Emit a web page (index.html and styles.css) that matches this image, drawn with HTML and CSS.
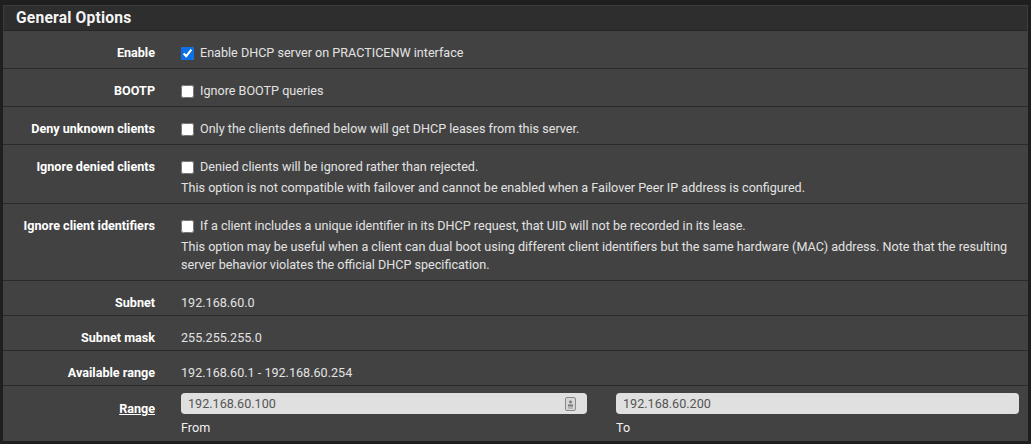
FILE: index.html
```html
<!DOCTYPE html>
<html lang="en">
<head>
    <meta charset="UTF-8">
    <title>DHCP Server - General Options</title>
    <link rel="stylesheet" href="styles.css">
</head>
<body>
    <div class="panel">
        <div class="panel-heading">General Options</div>
        <div class="panel-body">
            <div class="row">
                <div class="label">Enable</div>
                <div class="field">
                    <label class="check"><input type="checkbox" checked> Enable DHCP server on PRACTICENW interface</label>
                </div>
            </div>
            <div class="row">
                <div class="label">BOOTP</div>
                <div class="field">
                    <label class="check"><input type="checkbox"> Ignore BOOTP queries</label>
                </div>
            </div>
            <div class="row">
                <div class="label">Deny unknown clients</div>
                <div class="field">
                    <label class="check"><input type="checkbox"> Only the clients defined below will get DHCP leases from this server.</label>
                </div>
            </div>
            <div class="row">
                <div class="label">Ignore denied clients</div>
                <div class="field">
                    <label class="check"><input type="checkbox"> Denied clients will be ignored rather than rejected.</label>
                    <div class="help">This option is not compatible with failover and cannot be enabled when a Failover Peer IP address is configured.</div>
                </div>
            </div>
            <div class="row">
                <div class="label">Ignore client identifiers</div>
                <div class="field">
                    <label class="check"><input type="checkbox"> If a client includes a unique identifier in its DHCP request, that UID will not be recorded in its lease.</label>
                    <div class="help">This option may be useful when a client can dual boot using different client identifiers but the same hardware (MAC) address. Note that the resulting server behavior violates the official DHCP specification.</div>
                </div>
            </div>
            <div class="row static">
                <div class="label">Subnet</div>
                <div class="field">192.168.60.0</div>
            </div>
            <div class="row static">
                <div class="label">Subnet mask</div>
                <div class="field">255.255.255.0</div>
            </div>
            <div class="row static">
                <div class="label">Available range</div>
                <div class="field">192.168.60.1 - 192.168.60.254</div>
            </div>
            <div class="row range">
                <div class="label"><span class="link">Range</span></div>
                <div class="field range-fields">
                    <div class="range-col">
                        <div class="input">
                            <span>192.168.60.100</span>
                            <svg class="card" width="11" height="14" viewBox="0 0 11 14">
                                <rect x="0.5" y="0.5" width="10" height="13" rx="1.5" fill="#d6d6d6" stroke="#8a8a8a"/>
                                <circle cx="5.5" cy="5" r="1.4" fill="#777"/>
                                <rect x="3" y="7.5" width="5" height="2" fill="#777"/>
                                <rect x="3" y="10.5" width="5" height="1" fill="#999"/>
                            </svg>
                        </div>
                        <div class="sub">From</div>
                    </div>
                    <div class="range-col">
                        <div class="input"><span>192.168.60.200</span></div>
                        <div class="sub">To</div>
                    </div>
                </div>
            </div>
        </div>
    </div>
</body>
</html>
```

FILE: styles.css
```css
body {
    margin: 0;
    padding: 5px 3px 0 3px;
    background-color: #1f1f1f;
    font-family: Roboto, "Liberation Sans", sans-serif;
    font-size: 12.6px;
    color: #e2e2e2;
}
.panel {
    width: 1025px;
    background-color: #424242;
}
.panel-heading {
    background-color: #2e2e2e;
    border: 1px solid #3c3c3c;
    border-bottom: 1px solid #262626;
    height: 24px;
    line-height: 24px;
    padding-left: 12px;
    font-size: 15.6px;
    font-weight: bold;
    color: #f4f4f4;
    letter-spacing: 0.2px;
}
.row {
    display: flex;
    padding: 13px 0 6px;
    border-top: 1px solid #2a2a2a;
    line-height: 18px;
}
.row:first-child {
    border-top: none;
}
.row.static {
    padding-bottom: 3px;
}
.row.range {
    padding: 7px 0 4px;
}
.label {
    width: 152px;
    flex-shrink: 0;
    text-align: right;
    font-weight: bold;
    color: #ffffff;
}
.row.range .label {
    padding-top: 7px;
}
.link {
    text-decoration: underline;
}
.field {
    padding-left: 26px;
    flex: 1;
    padding-right: 10px;
}
.check {
    display: flex;
    align-items: center;
}
.check input {
    width: 13px;
    height: 13px;
    margin: 0 6px 0 0;
    accent-color: #0b6fe8;
}
.help {
    margin-top: 3px;
}
.range-fields {
    display: grid;
    grid-template-columns: 406px 403px;
    column-gap: 29px;
}
.input {
    display: flex;
    align-items: center;
    justify-content: space-between;
    height: 21px;
    background-color: #e0e0e0;
    border-radius: 4px;
    padding: 0 11px 0 7px;
    color: #555555;
}
.card {
    display: block;
}
.sub {
    margin-top: 5px;
    color: #f0f0f0;
}
```
